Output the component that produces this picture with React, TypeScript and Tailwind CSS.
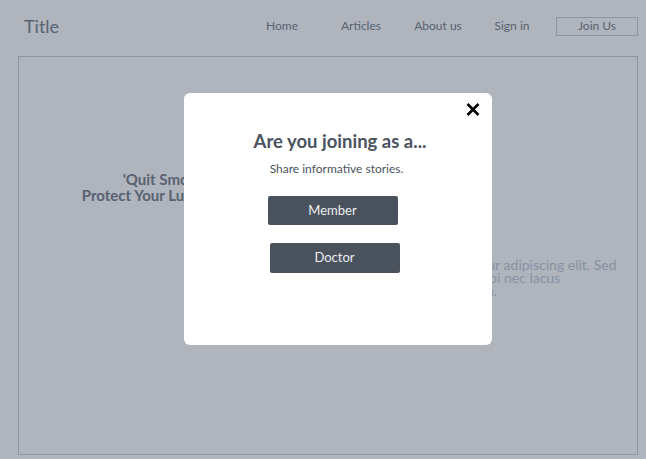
import React from 'react';

const font = { fontFamily: 'Lato, "Noto Sans", sans-serif' };

const NavBar = () => {
  return (
    <header className="flex h-[52px] items-center justify-between pl-6 pr-[8px]">
      <h1 className="text-[18px] text-[#7b8490]">Title</h1>
      <nav className="flex items-center text-[12px] text-[#7b8490]">
        <a className="w-[80px] text-center">Home</a>
        <a className="w-[78px] text-center">Articles</a>
        <a className="w-[76px] text-center">About us</a>
        <a className="w-[72px] text-center">Sign in</a>
        <a className="ml-[8px] flex h-[19px] w-[82px] items-center justify-center border border-[#c6d0dc]">Join Us</a>
      </nav>
    </header>
  );
};

const Hero = () => {
  return (
    <main className="ml-[18px] mr-[8px] mt-[4px] flex h-[399px] border border-[#c6d0dc]">
      <div className="flex w-[305px] flex-col items-center pt-[114px] text-center">
        <h2 className="text-[15px] font-bold leading-[16px] text-[#7b8490]">
          'Quit Smoking,
          <br />
          Protect Your Lungs for Life'
        </h2>
      </div>
      <div className="pl-[48px] pt-[201px]">
        <p className="whitespace-nowrap text-[14px] leading-[13px] text-[#c1cbd9]">
          sit amet, consectetur adipiscing elit. Sed
          <br />
          ut euismod nisl, turpi nec lacus
          <br />
          mattis in a interdum.
        </p>
      </div>
    </main>
  );
};

const JoinModal = () => {
  return (
    <div className="fixed inset-0 bg-[#101f37]/[0.33]">
      <div className="ml-[184px] mt-[93px] flex h-[252px] w-[308px] flex-col items-center rounded-[6px] bg-white">
        <div className="flex w-full justify-end pr-[12px] pt-[10px]">
          <svg width="14" height="13" viewBox="0 0 14 13" fill="none">
            <path d="M1.5 1L12.5 12M12.5 1L1.5 12" stroke="#000" strokeWidth="2.6" strokeLinecap="butt" />
          </svg>
        </div>
        <h3 className="ml-[4px] mt-[13px] text-[18.5px] font-bold leading-[24px] text-[#4b5361]">Are you joining as a...</h3>
        <p className="mr-[3px] mt-[7px] text-[12px] text-[#4b5361]">Share informative stories.</p>
        <button className="mr-[11px] mt-[18px] h-[29px] w-[130px] rounded-[2px] bg-[#4a525d] text-[13px] text-[#eceef0]">
          Member
        </button>
        <button className="mr-[7px] mt-[18px] h-[30px] w-[130px] rounded-[2px] bg-[#4a525d] text-[13px] text-[#eceef0]">
          Doctor
        </button>
      </div>
    </div>
  );
};

export default function App() {
  return (
    <div className="relative h-[459px] w-full overflow-hidden bg-white" style={font}>
      <NavBar />
      <Hero />
      <JoinModal />
    </div>
  );
}
